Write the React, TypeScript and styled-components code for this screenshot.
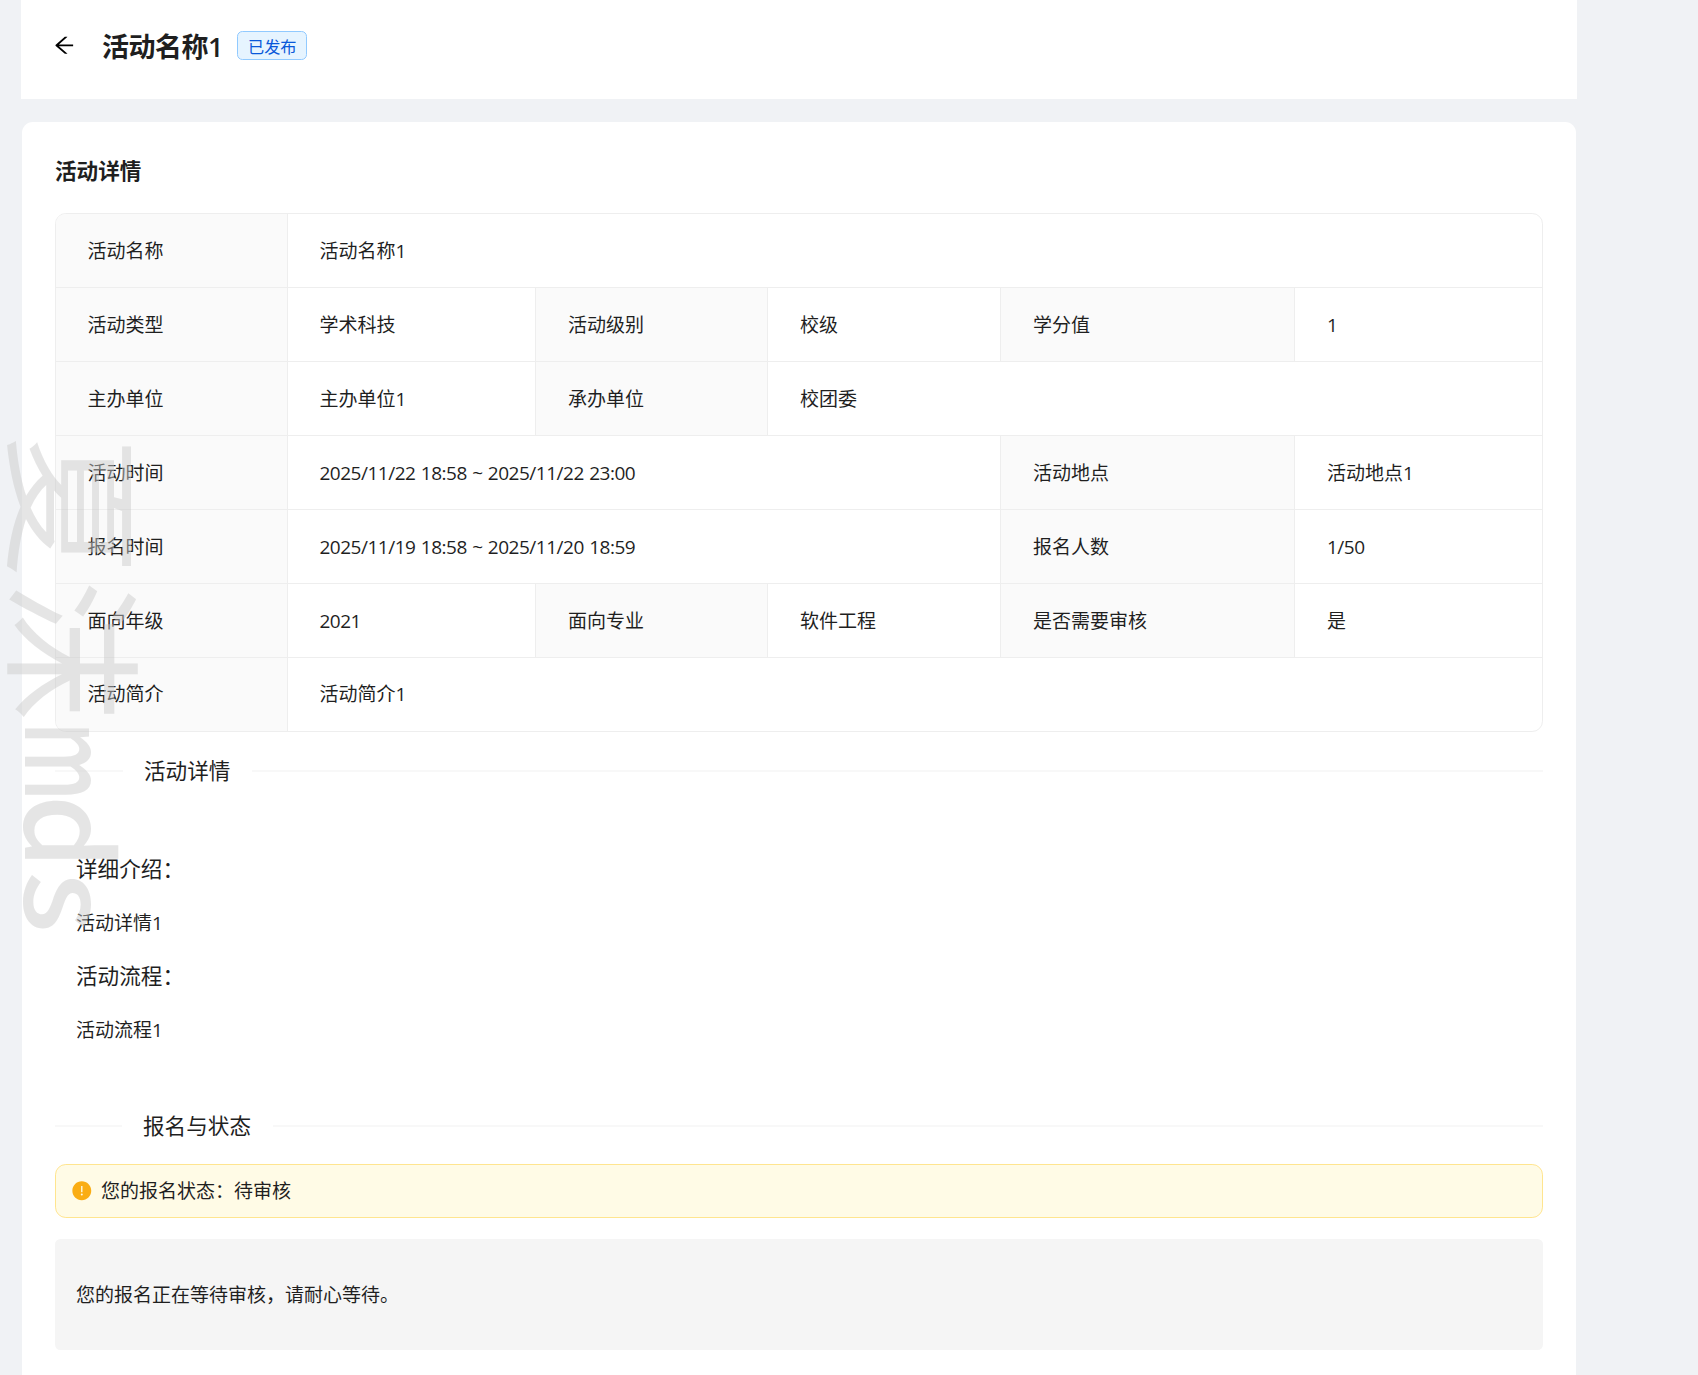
import React from "react";
import styled, { createGlobalStyle } from "styled-components";

const GlobalStyle = createGlobalStyle`
  * { box-sizing: border-box; }
  body {
    margin: 0;
    background: #f0f2f5;
    color: #1f1f1f;
    font-family: "Open Sans", "Noto Sans CJK SC", sans-serif;
    font-size: 19px;
    line-height: 30px;
  }
  h1, h2, h3, h4, p { margin: 0; }
`;

const Page = styled.main`
  position: relative;
  height: 1375px;
  padding-left: 21px;
  overflow: hidden;
  background: #f0f2f5;
`;

const Header = styled.header`
  display: flex;
  align-items: flex-start;
  width: 1556px;
  height: 99px;
  padding: 27px 32px 0;
  background: #fff;
`;

const BackButton = styled.button`
  display: flex;
  width: 24px;
  height: 24px;
  margin: 6px 26px 0 -1px;
  padding: 0;
  border: 0;
  background: none;
  color: #000;

  svg { width: 24.6px; height: 24.6px; flex: none; }
`;

const Title = styled.h1`
  padding-top: 1px;
  font-size: 27px;
  font-weight: 600;
  line-height: 38px;
  letter-spacing: -0.5px;
  white-space: nowrap;
`;

const Tag = styled.span`
  width: 70px;
  height: 29px;
  margin: 4px 0 0 14px;
  padding-left: 10px;
  border: 1px solid #91caff;
  border-radius: 5.4px;
  background: #e6f4ff;
  color: #0958d9;
  font-size: 16.2px;
  line-height: 30px;
  white-space: nowrap;
`;

const Card = styled.section`
  width: 1554px;
  height: 1400px;
  margin: 23px 0 0 1px;
  padding: 32px 33px 0;
  border-radius: 10.8px;
  background: #fff;
`;

const CardTitle = styled.h2`
  height: 59px;
  font-size: 21.6px;
  font-weight: 600;
  line-height: 34px;
`;

const Descriptions = styled.dl`
  display: grid;
  grid-template-columns: 232px 248px 232px 233px 294px 247px;
  grid-template-rows: repeat(6, 74px) 73px;
  width: 1488px;
  margin: 0 0 21px;
  border: 1px solid #eeeeee;
  border-radius: 10.8px;
  overflow: hidden;
`;

const Cell = styled.div<{ $span?: number; $first?: boolean; $edge?: boolean; $last?: boolean }>`
  display: flex;
  align-items: center;
  grid-column: span ${(p) => p.$span ?? 1};
  padding: ${(p) => (p.$last ? "0 0 2px" : "1px 0 0")};
  padding-left: ${(p) => (p.$first ? 31.5 : 32)}px;
  border-right: ${(p) => (p.$edge ? "0" : "1px solid #eeeeee")};
  border-bottom: ${(p) => (p.$last ? "0" : "1px solid #eeeeee")};
  white-space: nowrap;
`;

const LabelCell = styled(Cell).attrs({ as: "dt" })`
  background: #fafafa;
`;

const ValueCell = styled(Cell).attrs({ as: "dd" })<{ $numeric?: boolean }>`
  margin: 0;
  letter-spacing: ${(p) => (p.$numeric ? "-0.49px" : "0")};
  word-spacing: ${(p) => (p.$numeric ? "0.9px" : "0")};
`;

const Divider = styled.div<{ $lead: number }>`
  display: grid;
  grid-template-columns: ${(p) => p.$lead}px auto 1fr;
  column-gap: 21.6px;
  align-items: center;
  height: 36px;

  &::before, &::after {
    content: "";
    height: 2px;
    background: #f8f8f8;
  }
`;

const DividerTitle = styled.h3`
  margin-left: -0.6px;
  font-size: 21.6px;
  font-weight: 400;
  line-height: 34px;
`;

const Details = styled.div`
  display: flex;
  flex-direction: column;
  gap: 21.5px;
  height: 319px;
  padding: 63px 21px 0;
`;

const DetailTitle = styled.h4`
  height: 34px;
  font-size: 21.6px;
  font-weight: 400;
  line-height: 34px;
`;

const DetailText = styled.p`
  line-height: 30px;
`;

const Alert = styled.div`
  display: flex;
  align-items: center;
  gap: 11px;
  height: 54px;
  margin-top: 20px;
  padding: 0 14.5px;
  border: 1px solid #ffe58f;
  border-radius: 10.8px;
  background: #fffbe6;

  svg { width: 21.6px; height: 21.6px; color: #faad14; flex: none; margin-right: -2px; }
`;

const Notice = styled.div`
  display: flex;
  align-items: center;
  height: 111px;
  margin-top: 21px;
  padding: 0 21px;
  border-radius: 5.4px;
  background: #f5f5f5;
`;

/* Vertical watermark laid over the page, reading top to bottom. */
const Watermark = styled.div`
  position: absolute;
  top: 434px;
  left: 154px;
  display: flex;
  height: 147px;
  transform: rotate(90deg);
  transform-origin: 0 0;
  color: rgb(202, 202, 202);
  opacity: 0.47;
  font-family: "Noto Sans CJK SC", sans-serif;
  font-size: 141px;
  line-height: 147px;
  pointer-events: none;
`;

const WatermarkGlyph = styled.span`
  display: flex;
  justify-content: center;
  width: 144.5px;
`;

const WatermarkLatin = styled.span`
  display: flex;
  margin: 5px 0 0 3px;
  font-size: 117px;
  font-weight: 500;
`;

const WatermarkLetter = styled.span<{ $squeeze: number }>`
  display: flex;
  justify-content: center;
  width: 70.5px;
  transform: scaleX(${(p) => p.$squeeze});
`;

const ArrowLeftIcon = () => (
  <svg viewBox="0 0 1024 1024" fill="currentColor" aria-hidden="true">
    <path d="M872 474H286.9l350.2-304c5.6-4.9 2.2-14-5.2-14h-88.5c-3.9 0-7.6 1.4-10.5 3.9L155 487.8a31.96 31.96 0 0 0 0 48.3L535.1 866c1.5 1.3 3.3 2 5.2 2h91.5c7.4 0 10.8-9.2 5.2-14L286.9 550H872c4.4 0 8-3.6 8-8v-60c0-4.4-3.6-8-8-8z" />
  </svg>
);

const ExclamationIcon = () => (
  <svg viewBox="0 0 1024 1024" fill="currentColor" aria-hidden="true">
    <path d="M512 64C264.6 64 64 264.6 64 512s200.6 448 448 448 448-200.6 448-448S759.4 64 512 64zm-32 232c0-4.4 3.6-8 8-8h48c4.4 0 8 3.6 8 8v272c0 4.4-3.6 8-8 8h-48c-4.4 0-8-3.6-8-8V296zm32 440a48.01 48.01 0 0 1 0-96 48.01 48.01 0 0 1 0 96z" />
  </svg>
);

type Field = { label: string; value: string; span?: number; numeric?: boolean };

const rows: Field[][] = [
  [{ label: "活动名称", value: "活动名称1", span: 5 }],
  [
    { label: "活动类型", value: "学术科技" },
    { label: "活动级别", value: "校级" },
    { label: "学分值", value: "1" },
  ],
  [
    { label: "主办单位", value: "主办单位1" },
    { label: "承办单位", value: "校团委", span: 3 },
  ],
  [
    { label: "活动时间", value: "2025/11/22 18:58 ~ 2025/11/22 23:00", span: 3, numeric: true },
    { label: "活动地点", value: "活动地点1" },
  ],
  [
    { label: "报名时间", value: "2025/11/19 18:58 ~ 2025/11/20 18:59", span: 3, numeric: true },
    { label: "报名人数", value: "1/50", numeric: true },
  ],
  [
    { label: "面向年级", value: "2021", numeric: true },
    { label: "面向专业", value: "软件工程" },
    { label: "是否需要审核", value: "是" },
  ],
  [{ label: "活动简介", value: "活动简介1", span: 5 }],
];

export default function App() {
  return (
    <>
      <GlobalStyle />
      <Page lang="zh-CN">
        <Header>
          <BackButton aria-label="返回">
            <ArrowLeftIcon />
          </BackButton>
          <Title>活动名称1</Title>
          <Tag>已发布</Tag>
        </Header>
        <Card>
          <CardTitle>活动详情</CardTitle>
          <Descriptions>
            {rows.map((fields, r) =>
              fields.map((f, i) => (
                <React.Fragment key={f.label}>
                  <LabelCell $first={i === 0} $last={r === rows.length - 1}>
                    {f.label}
                  </LabelCell>
                  <ValueCell
                    $span={f.span}
                    $numeric={f.numeric}
                    $first={i === 0}
                    $edge={i === fields.length - 1}
                    $last={r === rows.length - 1}
                  >
                    {f.value}
                  </ValueCell>
                </React.Fragment>
              ))
            )}
          </Descriptions>
          <Divider $lead={68}>
            <DividerTitle>活动详情</DividerTitle>
          </Divider>
          <Details>
            <DetailTitle>详细介绍：</DetailTitle>
            <DetailText>活动详情1</DetailText>
            <DetailTitle>活动流程：</DetailTitle>
            <DetailText>活动流程1</DetailText>
          </Details>
          <Divider $lead={67}>
            <DividerTitle>报名与状态</DividerTitle>
          </Divider>
          <Alert>
            <ExclamationIcon />
            <span>您的报名状态：待审核</span>
          </Alert>
          <Notice>您的报名正在等待审核，请耐心等待。</Notice>
        </Card>
        <Watermark>
          <WatermarkGlyph>夏</WatermarkGlyph>
          <WatermarkGlyph>沫</WatermarkGlyph>
          <WatermarkLatin>
            <WatermarkLetter $squeeze={0.73}>m</WatermarkLetter>
            <WatermarkLetter $squeeze={1}>d</WatermarkLetter>
            <WatermarkLetter $squeeze={1.1}>s</WatermarkLetter>
          </WatermarkLatin>
        </Watermark>
      </Page>
    </>
  );
}
